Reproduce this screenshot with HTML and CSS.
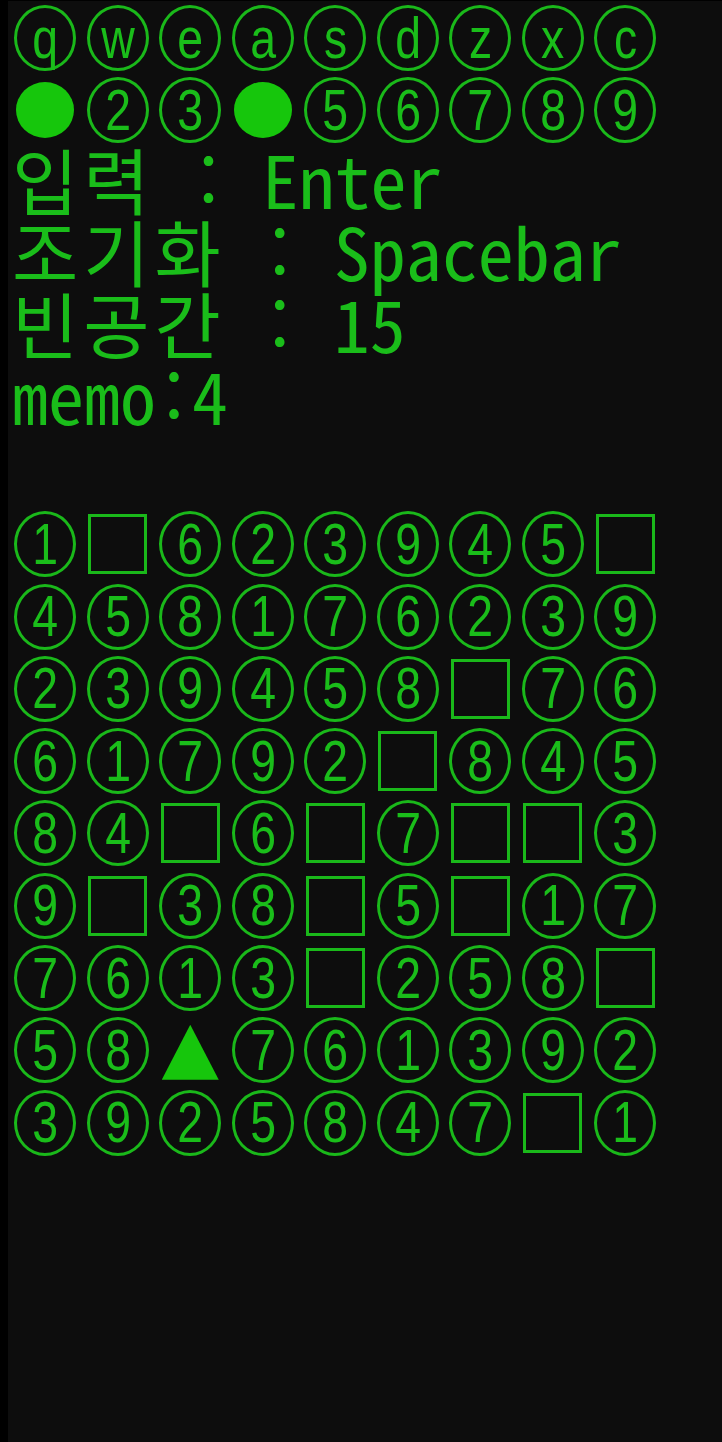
FILE: index.html
```html
<!DOCTYPE html>
<html lang="ko">
<head>
<meta charset="utf-8">
<title>Sudoku Console</title>
<link rel="stylesheet" href="styles.css">
</head>
<body>
<main class="screen">
  <section class="grid">
    <div class="cell"><span class="c"><span class="g">q</span></span></div>
    <div class="cell"><span class="c"><span class="g">w</span></span></div>
    <div class="cell"><span class="c"><span class="g">e</span></span></div>
    <div class="cell"><span class="c"><span class="g">a</span></span></div>
    <div class="cell"><span class="c"><span class="g">s</span></span></div>
    <div class="cell"><span class="c"><span class="g">d</span></span></div>
    <div class="cell"><span class="c"><span class="g">z</span></span></div>
    <div class="cell"><span class="c"><span class="g">x</span></span></div>
    <div class="cell"><span class="c"><span class="g">c</span></span></div>

    <div class="cell"><span class="dot"></span></div>
    <div class="cell"><span class="c"><span class="g">2</span></span></div>
    <div class="cell"><span class="c"><span class="g">3</span></span></div>
    <div class="cell"><span class="dot"></span></div>
    <div class="cell"><span class="c"><span class="g">5</span></span></div>
    <div class="cell"><span class="c"><span class="g">6</span></span></div>
    <div class="cell"><span class="c"><span class="g">7</span></span></div>
    <div class="cell"><span class="c"><span class="g">8</span></span></div>
    <div class="cell"><span class="c"><span class="g">9</span></span></div>
  </section>

  <section class="info">
    <p class="line"><span class="ko">입력</span> : Enter</p>
    <p class="line"><span class="ko">조기화</span> : Spacebar</p>
    <p class="line"><span class="ko">빈공간</span> : 15</p>
    <p class="line">memo:4</p>
    <p class="line"> </p>
  </section>

  <section class="grid board">
    <div class="cell"><span class="c"><span class="g">1</span></span></div>
    <div class="cell"><span class="b"></span></div>
    <div class="cell"><span class="c"><span class="g">6</span></span></div>
    <div class="cell"><span class="c"><span class="g">2</span></span></div>
    <div class="cell"><span class="c"><span class="g">3</span></span></div>
    <div class="cell"><span class="c"><span class="g">9</span></span></div>
    <div class="cell"><span class="c"><span class="g">4</span></span></div>
    <div class="cell"><span class="c"><span class="g">5</span></span></div>
    <div class="cell"><span class="b"></span></div>

    <div class="cell"><span class="c"><span class="g">4</span></span></div>
    <div class="cell"><span class="c"><span class="g">5</span></span></div>
    <div class="cell"><span class="c"><span class="g">8</span></span></div>
    <div class="cell"><span class="c"><span class="g">1</span></span></div>
    <div class="cell"><span class="c"><span class="g">7</span></span></div>
    <div class="cell"><span class="c"><span class="g">6</span></span></div>
    <div class="cell"><span class="c"><span class="g">2</span></span></div>
    <div class="cell"><span class="c"><span class="g">3</span></span></div>
    <div class="cell"><span class="c"><span class="g">9</span></span></div>

    <div class="cell"><span class="c"><span class="g">2</span></span></div>
    <div class="cell"><span class="c"><span class="g">3</span></span></div>
    <div class="cell"><span class="c"><span class="g">9</span></span></div>
    <div class="cell"><span class="c"><span class="g">4</span></span></div>
    <div class="cell"><span class="c"><span class="g">5</span></span></div>
    <div class="cell"><span class="c"><span class="g">8</span></span></div>
    <div class="cell"><span class="b"></span></div>
    <div class="cell"><span class="c"><span class="g">7</span></span></div>
    <div class="cell"><span class="c"><span class="g">6</span></span></div>

    <div class="cell"><span class="c"><span class="g">6</span></span></div>
    <div class="cell"><span class="c"><span class="g">1</span></span></div>
    <div class="cell"><span class="c"><span class="g">7</span></span></div>
    <div class="cell"><span class="c"><span class="g">9</span></span></div>
    <div class="cell"><span class="c"><span class="g">2</span></span></div>
    <div class="cell"><span class="b"></span></div>
    <div class="cell"><span class="c"><span class="g">8</span></span></div>
    <div class="cell"><span class="c"><span class="g">4</span></span></div>
    <div class="cell"><span class="c"><span class="g">5</span></span></div>

    <div class="cell"><span class="c"><span class="g">8</span></span></div>
    <div class="cell"><span class="c"><span class="g">4</span></span></div>
    <div class="cell"><span class="b"></span></div>
    <div class="cell"><span class="c"><span class="g">6</span></span></div>
    <div class="cell"><span class="b"></span></div>
    <div class="cell"><span class="c"><span class="g">7</span></span></div>
    <div class="cell"><span class="b"></span></div>
    <div class="cell"><span class="b"></span></div>
    <div class="cell"><span class="c"><span class="g">3</span></span></div>

    <div class="cell"><span class="c"><span class="g">9</span></span></div>
    <div class="cell"><span class="b"></span></div>
    <div class="cell"><span class="c"><span class="g">3</span></span></div>
    <div class="cell"><span class="c"><span class="g">8</span></span></div>
    <div class="cell"><span class="b"></span></div>
    <div class="cell"><span class="c"><span class="g">5</span></span></div>
    <div class="cell"><span class="b"></span></div>
    <div class="cell"><span class="c"><span class="g">1</span></span></div>
    <div class="cell"><span class="c"><span class="g">7</span></span></div>

    <div class="cell"><span class="c"><span class="g">7</span></span></div>
    <div class="cell"><span class="c"><span class="g">6</span></span></div>
    <div class="cell"><span class="c"><span class="g">1</span></span></div>
    <div class="cell"><span class="c"><span class="g">3</span></span></div>
    <div class="cell"><span class="b"></span></div>
    <div class="cell"><span class="c"><span class="g">2</span></span></div>
    <div class="cell"><span class="c"><span class="g">5</span></span></div>
    <div class="cell"><span class="c"><span class="g">8</span></span></div>
    <div class="cell"><span class="b"></span></div>

    <div class="cell"><span class="c"><span class="g">5</span></span></div>
    <div class="cell"><span class="c"><span class="g">8</span></span></div>
    <div class="cell"><span class="tri"></span></div>
    <div class="cell"><span class="c"><span class="g">7</span></span></div>
    <div class="cell"><span class="c"><span class="g">6</span></span></div>
    <div class="cell"><span class="c"><span class="g">1</span></span></div>
    <div class="cell"><span class="c"><span class="g">3</span></span></div>
    <div class="cell"><span class="c"><span class="g">9</span></span></div>
    <div class="cell"><span class="c"><span class="g">2</span></span></div>

    <div class="cell"><span class="c"><span class="g">3</span></span></div>
    <div class="cell"><span class="c"><span class="g">9</span></span></div>
    <div class="cell"><span class="c"><span class="g">2</span></span></div>
    <div class="cell"><span class="c"><span class="g">5</span></span></div>
    <div class="cell"><span class="c"><span class="g">8</span></span></div>
    <div class="cell"><span class="c"><span class="g">4</span></span></div>
    <div class="cell"><span class="c"><span class="g">7</span></span></div>
    <div class="cell"><span class="b"></span></div>
    <div class="cell"><span class="c"><span class="g">1</span></span></div>
  </section>
</main>
</body>
</html>
```
FILE: styles.css
```css
html, body {
  margin: 0;
  padding: 0;
  background: #000;
}

body {
  min-height: 1442px;
  padding-top: 1px;
  padding-left: 8px;
  box-sizing: border-box;
}

.screen {
  background: #0d0d0d;
  min-height: 1441px;
  padding-top: 1px;
  padding-left: 1px;
  box-sizing: border-box;
  color: #1abd1a;
  font-family: "Noto Sans Mono CJK KR", "Noto Sans CJK KR", "DejaVu Sans Mono", monospace;
  font-weight: 300;
}

.grid {
  display: grid;
  grid-template-columns: repeat(9, 72.5px);
  grid-auto-rows: 72.3px;
}

.cell {
  display: flex;
  align-items: center;
  justify-content: center;
}

.c {
  width: 62px;
  height: 66px;
  box-sizing: border-box;
  border: 3px solid #1ab81a;
  border-radius: 50%;
  display: flex;
  align-items: center;
  justify-content: center;
  font-family: "Liberation Sans", Arial, sans-serif;
  font-weight: 400;
  font-size: 58px;
  line-height: 1;
  padding-bottom: 1px;
}

.g {
  display: inline-block;
  transform: scaleX(0.8);
}

.b {
  width: 59px;
  height: 60px;
  box-sizing: border-box;
  border: 3px solid #1ab81a;
}

.dot {
  width: 58px;
  height: 56px;
  border-radius: 50%;
  background: #16c60c;
}

.tri {
  width: 57px;
  height: 55px;
  background: #16c60c;
  clip-path: polygon(50% 0, 100% 100%, 0 100%);
  margin-top: 4px;
}

.info {
  display: flex;
  flex-direction: column;
}

.line {
  margin: 0;
  height: 72.3px;
  font-size: 72px;
  line-height: 62px;
  white-space: pre;
  padding-left: 3px;
}

.ko {
  letter-spacing: 5px;
}
```
